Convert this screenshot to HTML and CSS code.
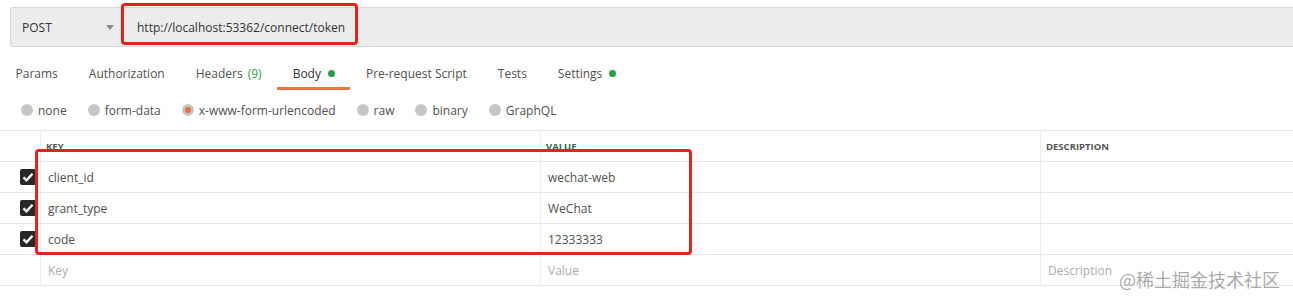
FILE: index.html
```html
<!doctype html>
<html>
<head>
<meta charset="utf-8">
<title>Postman request</title>
<link rel="stylesheet" href="styles.css">
</head>
<body>

<div class="page">
    <div class="reqBar">
        <div class="method">
            <span>POST</span>
            <span class="caret"></span>
        </div>
        <div class="url">http://localhost:53362/connect/token</div>
    </div>
    <div class="mark markUrl"></div>

    <ul class="tabs">
        <li>Params</li>
        <li>Authorization</li>
        <li>Headers <span class="green">(9)</span></li>
        <li class="active">Body <i class="dot"></i></li>
        <li>Pre-request Script</li>
        <li>Tests</li>
        <li>Settings <i class="dot"></i></li>
    </ul>

    <ul class="radios">
        <li><i class="radio"></i>none</li>
        <li><i class="radio"></i>form-data</li>
        <li><i class="radio on"></i>x-www-form-urlencoded</li>
        <li><i class="radio"></i>raw</li>
        <li><i class="radio"></i>binary</li>
        <li><i class="radio"></i>GraphQL</li>
    </ul>

    <div class="table">
        <div class="row head">
            <div class="cell chk"></div>
            <div class="cell">KEY</div>
            <div class="cell">VALUE</div>
            <div class="cell">DESCRIPTION</div>
        </div>
        <div class="row">
            <div class="cell chk"><span class="box"><svg viewBox="0 0 16 16" width="16" height="16"><path d="M3.5 8.3l3 3 6-6.6" fill="none" stroke="#fff" stroke-width="2.4"/></svg></span></div>
            <div class="cell">client_id</div>
            <div class="cell">wechat-web</div>
            <div class="cell"></div>
        </div>
        <div class="row">
            <div class="cell chk"><span class="box"><svg viewBox="0 0 16 16" width="16" height="16"><path d="M3.5 8.3l3 3 6-6.6" fill="none" stroke="#fff" stroke-width="2.4"/></svg></span></div>
            <div class="cell">grant_type</div>
            <div class="cell">WeChat</div>
            <div class="cell"></div>
        </div>
        <div class="row">
            <div class="cell chk"><span class="box"><svg viewBox="0 0 16 16" width="16" height="16"><path d="M3.5 8.3l3 3 6-6.6" fill="none" stroke="#fff" stroke-width="2.4"/></svg></span></div>
            <div class="cell">code</div>
            <div class="cell">12333333</div>
            <div class="cell"></div>
        </div>
        <div class="row empty">
            <div class="cell chk"></div>
            <div class="cell">Key</div>
            <div class="cell">Value</div>
            <div class="cell">Description</div>
        </div>
    </div>
    <div class="mark markRows"></div>

    <div class="watermark">@稀土掘金技术社区</div>
</div>

</body>
</html>
```
FILE: styles.css
```css
body{
    margin: 0;
    background: #fff;
    font-family: "Open Sans", "Noto Sans", sans-serif;
    font-size: 12px;
    color: #505050;
}
ul{
    list-style: none;
    margin: 0;
    padding: 0;
}
.page{
    position: relative;
    height: 301px;
    overflow: hidden;
}

/* 请求地址栏 */
.reqBar{
    display: flex;
    height: 38px;
    margin: 7px 0 0 10px;
    border: 1px solid #d6d6d6;
    border-right: none;
    border-radius: 3px 0 0 3px;
    background: #ececec;
}
.method{
    width: 111px;
    display: flex;
    align-items: center;
    justify-content: space-between;
    padding: 0 8px 0 11px;
    box-sizing: border-box;
    color: #333;
}
.caret{
    width: 0;
    height: 0;
    border-left: 4px solid transparent;
    border-right: 4px solid transparent;
    border-top: 5px solid #8a8a8a;
}
.url{
    display: flex;
    align-items: center;
    padding-left: 15px;
    color: #333;
}

/* 红色标注框 */
.mark{
    position: absolute;
    border: 3px solid #e1251b;
    border-radius: 4px;
    box-sizing: border-box;
}
.markUrl{
    left: 121px;
    top: 3px;
    width: 237px;
    height: 42px;
}
.markRows{
    left: 35px;
    top: 149px;
    width: 657px;
    height: 106px;
}

/* 选项卡 */
.tabs{
    display: flex;
    margin-top: 13px;
}
.tabs li{
    padding: 0 15.5px;
    line-height: 27px;
    border-bottom: 3px solid transparent;
    display: flex;
    align-items: center;
    gap: 5px;
}
.tabs li.active{
    color: #333;
    border-bottom-color: #e8743f;
}
.green{
    color: #26a048;
}
.dot{
    width: 7px;
    height: 7px;
    border-radius: 50%;
    background: #26a048;
    margin-left: 2px;
}

/* 单选 */
.radios{
    display: flex;
    align-items: center;
    height: 40px;
    padding-left: 21px;
    gap: 21px;
}
.radios li{
    display: flex;
    align-items: center;
    gap: 5px;
}
.radio{
    width: 12px;
    height: 12px;
    border-radius: 50%;
    background: #c6c6c6;
    box-sizing: border-box;
}
.radio.on{
    border: 3px solid #c6c6c6;
    background: #ed6b3c;
}

/* 表格 */
.table{
    border-top: 1px solid #e8e8e8;
}
.row{
    display: grid;
    grid-template-columns: 40px 500px 500px 1fr;
    height: 31px;
    box-sizing: border-box;
    border-bottom: 1px solid #e8e8e8;
}
.cell{
    display: flex;
    align-items: center;
    padding-left: 7px;
    border-left: 1px solid #ececec;
}
.cell.chk{
    border-left: none;
    padding: 0 4px 0 0;
    justify-content: flex-end;
}
.head .cell{
    font-size: 9.5px;
    font-weight: 700;
    color: #555;
    padding-left: 5px;
}
.empty .cell{
    color: #ababab;
}
.box{
    width: 16px;
    height: 16px;
    border-radius: 2px;
    background: #282828;
    display: block;
}
.box svg{
    display: block;
}

.watermark{
    position: absolute;
    right: 13px;
    top: 266px;
    font-family: "Noto Sans CJK SC", sans-serif;
    font-size: 18px;
    color: rgba(140,140,140,0.75);
}
```
